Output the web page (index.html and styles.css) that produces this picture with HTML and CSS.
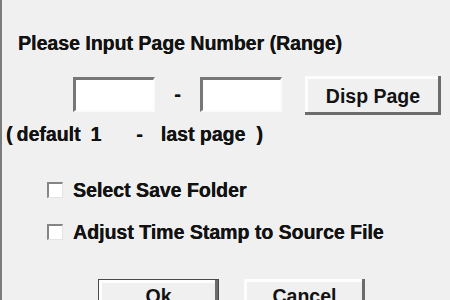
FILE: index.html
```html
<!DOCTYPE html>
<html>

<head>
    <meta charset="utf-8">
    <title>Page Range</title>
    <link rel="stylesheet" href="styles.css">
</head>

<body>

    <section class="dialog">
        <p class="title">Please Input Page Number (Range)</p>

        <div class="range">
            <input class="field" type="text">
            <span class="dash">-</span>
            <input class="field" type="text">
            <button class="btn disp">Disp Page</button>
        </div>

        <p class="hint">
            <span>(</span>
            <span class="h-default">default</span>
            <span class="h-first">1</span>
            <span class="h-dash">-</span>
            <span class="h-last">last page</span>
            <span class="h-close">)</span>
        </p>

        <div class="options">
            <label class="opt"><input class="check" type="checkbox"><span>Select Save Folder</span></label>
            <label class="opt"><input class="check" type="checkbox"><span>Adjust Time Stamp to Source File</span></label>
        </div>

        <div class="actions">
            <button class="btn act default">Ok</button>
            <button class="btn act">Cancel</button>
        </div>
    </section>

</body>

</html>
```

FILE: styles.css
```css
/* General styles */

html {
    background-color: #f0f0f0;
    height: 100%;
}

body {
    margin: 0;
    height: 300px;
    overflow: hidden;
    border-left: 2px solid #7c7c7c;
    font-family: "Liberation Sans", Arial, sans-serif;
    font-size: 19.5px;
    font-weight: bold;
    line-height: 22px;
    color: #121212;
    text-shadow: 0.3px 0 0 #121212;
}

* {
    box-sizing: border-box;
}

p {
    margin: 0;
}

/* Dialog layout */

.title {
    margin: 32px 0 0 16px;
}

.range {
    display: flex;
    align-items: flex-start;
    margin: 22px 0 0 71px;
}

.field {
    width: 82px;
    height: 35px;
    margin-top: 1px;
    background-color: #fff;
    border-top: 3px solid #777;
    border-left: 3px solid #777;
    border-right: 2px solid #fbfbfb;
    border-bottom: 2px solid #fbfbfb;
    outline: none;
}

.dash {
    width: 45px;
    text-align: center;
    margin-top: 7px;
}

/* hint line keeps the wide gaps of the original dialog */
.hint {
    display: flex;
    margin: 8px 0 0 4px;
}

.h-default { margin-left: 4px; }
.h-first { margin-left: 10px; }
.h-dash { margin-left: 35px; }
.h-last { margin-left: 18px; }
.h-close { margin-left: 11px; }

.options {
    display: flex;
    flex-direction: column;
    gap: 20px;
    margin: 34px 0 0 45px;
}

.opt {
    display: flex;
    align-items: center;
    gap: 10px;
}

.check {
    appearance: none;
    margin: 0;
    width: 16px;
    height: 16px;
    background-color: #fff;
    border-top: 2px solid #858585;
    border-left: 2px solid #858585;
    border-right: 1px solid #e4e4e4;
    border-bottom: 1px solid #e4e4e4;
}

/* Buttons */

.btn {
    font: inherit;
    color: inherit;
    background-color: #f0f0f0;
    border: 0;
    padding: 0;
    box-shadow: inset -3px -3px #6c6c6c, inset 3px 3px #fdfdfd;
}

.disp {
    width: 136px;
    height: 39px;
    margin-left: 23px;
}

.actions {
    display: flex;
    gap: 25px;
    margin: 36px 0 0 96px;
}

.act {
    width: 121px;
    height: 34px;
}

.default {
    border: 1px solid #4a4a4a;
}
```
